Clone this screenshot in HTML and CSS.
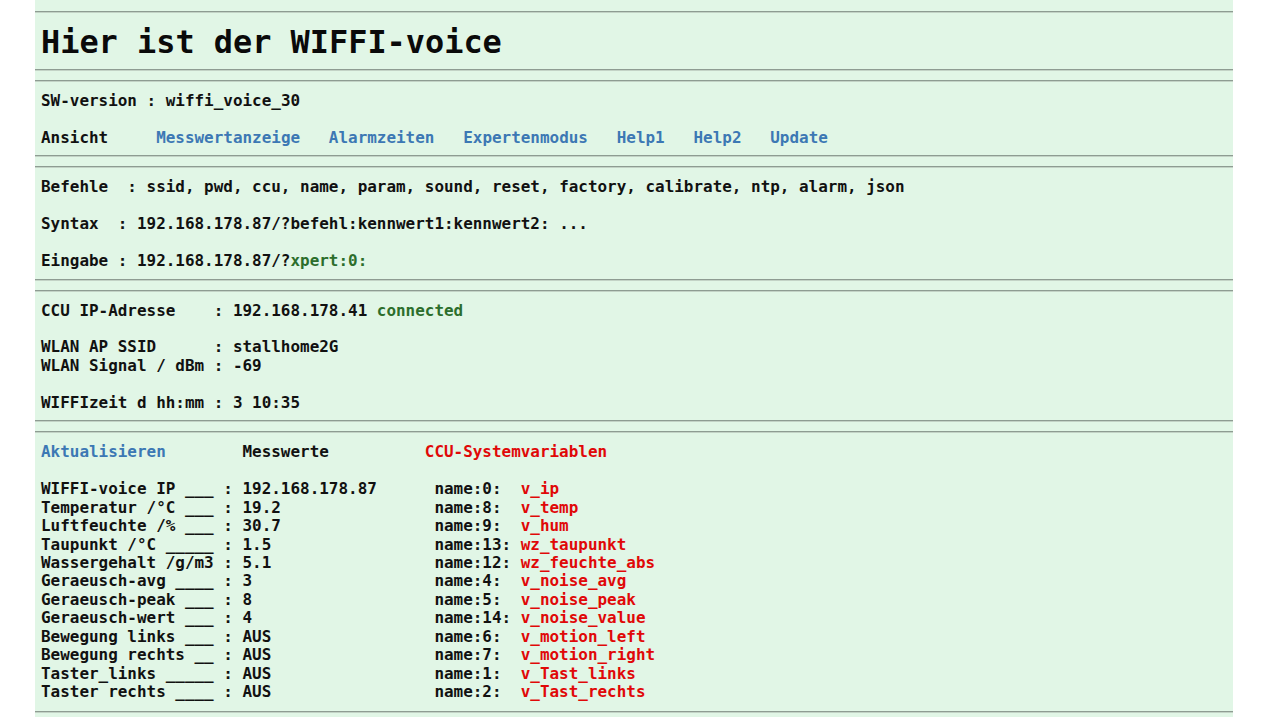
FILE: index.html
```html
<!DOCTYPE html>
<html lang="de">
<head>
<meta charset="utf-8">
<title>WIFFI-voice</title>
<link rel="stylesheet" href="styles.css">
</head>
<body>
<div class="page">
  <hr class="rule">
  <section class="sec sec-title">
    <h1 class="title">Hier ist der WIFFI-voice</h1>
  </section>
  <hr class="rule">
  <hr class="rule gap">
  <section class="sec">
    <div class="line"><span class="pre">SW-version : wiffi_voice_30</span></div>
    <div class="line"></div>
    <nav class="line nav">
      <span class="nav-label">Ansicht</span>
      <a class="link" href="#">Messwertanzeige</a>
      <a class="link" href="#">Alarmzeiten</a>
      <a class="link" href="#">Expertenmodus</a>
      <a class="link" href="#">Help1</a>
      <a class="link" href="#">Help2</a>
      <a class="link" href="#">Update</a>
    </nav>
  </section>
  <hr class="rule">
  <hr class="rule gap">
  <section class="sec">
    <div class="line kv kv-cmd"><span>Befehle</span><span class="pre">: ssid, pwd, ccu, name, param, sound, reset, factory, calibrate, ntp, alarm, json</span></div>
    <div class="line"></div>
    <div class="line kv kv-cmd2"><span>Syntax</span><span class="pre">: 192.168.178.87/?befehl:kennwert1:kennwert2: ...</span></div>
    <div class="line"></div>
    <div class="line kv kv-cmd2"><span>Eingabe</span><span class="pre">: 192.168.178.87/?<span class="ok">xpert:0:</span></span></div>
  </section>
  <hr class="rule">
  <hr class="rule gap">
  <section class="sec">
    <div class="line kv kv-info"><span>CCU IP-Adresse</span><span class="pre">: 192.168.178.41 <span class="ok">connected</span></span></div>
    <div class="line"></div>
    <div class="line kv kv-info"><span>WLAN AP SSID</span><span class="pre">: stallhome2G</span></div>
    <div class="line kv kv-info"><span>WLAN Signal / dBm</span><span class="pre">: -69</span></div>
    <div class="line"></div>
    <div class="line kv kv-info"><span>WIFFIzeit d hh:mm</span><span class="pre">: 3 10:35</span></div>
  </section>
  <hr class="rule">
  <hr class="rule gap">
  <section class="sec sec-last">
    <div class="line head">
      <a class="link" href="#">Aktualisieren</a>
      <span>Messwerte</span>
      <span class="red">CCU-Systemvariablen</span>
    </div>
    <div class="line"></div>
    <div class="table">
      <span class="pre">WIFFI-voice IP ___</span><span class="pre">: 192.168.178.87</span><span>name:0:</span><span class="red">v_ip</span>
      <span class="pre">Temperatur /°C ___</span><span class="pre">: 19.2</span><span>name:8:</span><span class="red">v_temp</span>
      <span class="pre">Luftfeuchte /% ___</span><span class="pre">: 30.7</span><span>name:9:</span><span class="red">v_hum</span>
      <span class="pre">Taupunkt /°C _____</span><span class="pre">: 1.5</span><span>name:13:</span><span class="red">wz_taupunkt</span>
      <span class="pre">Wassergehalt /g/m3</span><span class="pre">: 5.1</span><span>name:12:</span><span class="red">wz_feuchte_abs</span>
      <span class="pre">Geraeusch-avg ____</span><span class="pre">: 3</span><span>name:4:</span><span class="red">v_noise_avg</span>
      <span class="pre">Geraeusch-peak ___</span><span class="pre">: 8</span><span>name:5:</span><span class="red">v_noise_peak</span>
      <span class="pre">Geraeusch-wert ___</span><span class="pre">: 4</span><span>name:14:</span><span class="red">v_noise_value</span>
      <span class="pre">Bewegung links ___</span><span class="pre">: AUS</span><span>name:6:</span><span class="red">v_motion_left</span>
      <span class="pre">Bewegung rechts __</span><span class="pre">: AUS</span><span>name:7:</span><span class="red">v_motion_right</span>
      <span class="pre">Taster_links _____</span><span class="pre">: AUS</span><span>name:1:</span><span class="red">v_Tast_links</span>
      <span class="pre">Taster rechts ____</span><span class="pre">: AUS</span><span>name:2:</span><span class="red">v_Tast_rechts</span>
    </div>
  </section>
  <hr class="rule">
</div>
</body>
</html>
```

FILE: styles.css
```css
html, body {
  margin: 0;
  padding: 0;
  background: #ffffff;
}

body {
  font-family: "DejaVu Sans Mono", "Liberation Mono", monospace;
  font-weight: bold;
  font-size: 15.95px;
  color: #111111;
}

.page {
  margin-left: 35px;
  width: 1198px;
  background: #e1f6e6;
  padding-top: 11px;
  padding-bottom: 4px;
}

.rule {
  display: block;
  margin: 0;
  height: 0;
  border: none;
  border-top: 1px solid #8e9c92;
  border-bottom: 1px solid #c3d3c6;
}

.rule.gap {
  margin-top: 9px;
}

.sec {
  padding: 10px 6px 8px 6px;
}

.sec-title {
  padding: 10px 6px 8px 6px;
}

.sec-last {
  padding-bottom: 9px;
}

.title {
  margin: 0;
  font-size: 31.9px;
  line-height: 38px;
  font-weight: bold;
  color: #0a0a0a;
}

.line {
  line-height: 18.45px;
  min-height: 18.45px;
}

.pre {
  white-space: pre;
}

.link {
  color: #3c78b4;
  text-decoration: none;
}

.ok {
  color: #2c6e2c;
}

.red {
  color: #e00808;
}

.nav {
  display: flex;
  gap: 3ch;
}

.nav-label {
  margin-right: 2ch;
}

.kv {
  display: grid;
}

.kv-cmd {
  grid-template-columns: 9ch auto;
}

.kv-cmd2 {
  grid-template-columns: 8ch auto;
}

.kv-info {
  grid-template-columns: 18ch auto;
}

.head {
  display: grid;
  grid-template-columns: 21ch 19ch auto;
}

.table {
  display: grid;
  grid-template-columns: 19ch 22ch 9ch auto;
  line-height: 18.45px;
}
```
